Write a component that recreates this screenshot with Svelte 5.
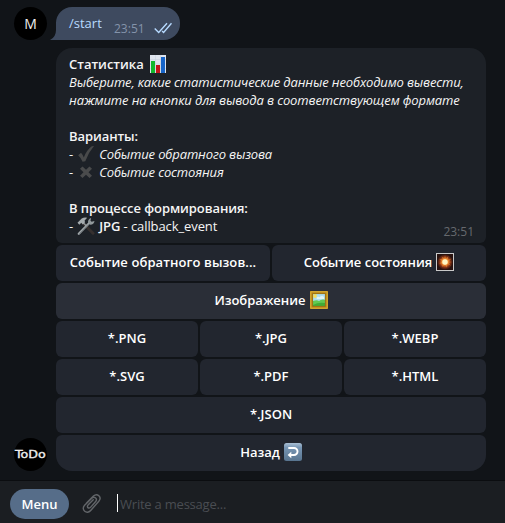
<script>
  const rows = [
    [{ text: 'Событие обратного вызов...', long: true }, { text: 'Событие состояния', icon: 'burst' }],
    [{ text: 'Изображение', icon: 'frame', active: true }],
    [{ text: '*.PNG' }, { text: '*.JPG' }, { text: '*.WEBP' }],
    [{ text: '*.SVG' }, { text: '*.PDF' }, { text: '*.HTML' }],
    [{ text: '*.JSON' }],
    [{ text: 'Назад', icon: 'back' }]
  ];
</script>

{#snippet emoji(name)}
  <svg class="emoji" viewBox="0 0 18 18" width="18" height="18" aria-hidden="true">
    {#if name === 'chart'}
      <rect x="1" y="0" width="16" height="18" fill="#dfe5ee" />
      <path d="M1 4.5h16M1 9h16M1 13.500h16M6.500 0v18M11.500 0v18" stroke="#c5cfdd" stroke-width=".5" />
      <rect x="2" y="6" width="4" height="12" fill="#12b82c" />
      <rect x="7" y="10" width="4" height="8" fill="#c01419" />
      <rect x="12" y="2" width="4" height="16" fill="#1765c9" />
    {:else if name === 'check'}
      <path d="M1.200 10.200 4 7.800Q6 10 6.800 12.500 9.500 5 14.800 1.200L17 1.100Q11.500 7.500 8.300 16.200L5.600 16.700Q4 12.800 1.200 10.200Z" fill="#48494a" />
    {:else if name === 'cross'}
      <path d="M5.500 3.500 9 6.800 12.500 3.500 15 5.800 11.500 9.200 15 12.700 12.500 15.100 9 11.700 5.500 15.100 3 12.700 6.500 9.200 3 5.800Z" fill="#4a4b4c" />
    {:else if name === 'tools'}
      <path d="M5.700 5.700 16 16.200" stroke="#36302f" stroke-width="3" stroke-linecap="round" />
      <path d="M6 5.500 10 9.500" stroke="#8e9294" stroke-width="1.500" />
      <path d="M.5 5.800 4.700 1.500Q7.500-.2 10.200.8L7.600 3.400 8 5.300 5.800 7.400 4.300 5.800 2.300 7.700Z" fill="#a5abae" />
      <path d="M1.800 16.800 12.800 5.500" stroke="#a5abae" stroke-width="2.200" stroke-linecap="round" />
      <path d="M2.300 16.700 11.500 7.200" stroke="#60676b" stroke-width=".7" />
      <path d="M11.100 5.800Q10.400 2.400 14.100.9L13.500 3.800 14.600 4.700 17.500 3.900Q17 7.500 13.300 7.700Z" fill="#92999c" />
    {:else if name === 'burst'}
      <defs>
        <radialGradient id="glow">
          <stop offset="0" stop-color="#fffbd8" />
          <stop offset=".22" stop-color="#ffe99a" />
          <stop offset=".42" stop-color="#e97c26" />
          <stop offset=".72" stop-color="#7d2f14" />
          <stop offset="1" stop-color="#29120f" />
        </radialGradient>
      </defs>
      <rect x=".5" y=".5" width="17" height="17" fill="#28120f" stroke="#c9c9c9" />
      <circle cx="9" cy="9" r="7.800" fill="url(#glow)" />
      <path d="m9 2 .8 4 2.600-3-.8 4 4-1.600-3.100 3 3.600.6-3.700.7 2.500 3-3.600-2-.5 4-1.700-3.700-3 3 1-4-4 .8 3.400-2.500L3 6l4 .6-1.400-3.400 2.800 2.600Z" fill="#f79a3d" opacity=".5" />
      <circle cx="9" cy="9" r="2.700" fill="#fff7c4" />
    {:else if name === 'frame'}
      <rect width="18" height="18" fill="#b88716" />
      <path d="M.8.8h16.400v16.400H.8z" fill="none" stroke="#dbb33b" />
      <rect x="3" y="3" width="12" height="12" fill="#acdef0" />
      <circle cx="5" cy="5" r="1.900" fill="#f5df5b" />
      <path d="M6.500 7q1.500-2 3-.7Q12 4 14 6v2H7Z" fill="#e0f5f5" />
      <path d="M3 10q4-1.500 6 0 2-2.200 6-1.300V15H3Z" fill="#62ca52" />
      <path d="M3 14q5-3 12-2v3H3Z" fill="#42ad35" />
      <path d="M2.600 2.600h12.800v12.800H2.600z" fill="none" stroke="#916916" stroke-width=".7" />
    {:else if name === 'back'}
      <defs>
        <linearGradient id="tile" x2="0" y2="1">
          <stop stop-color="#a9bfd4" />
          <stop offset=".25" stop-color="#7896b4" />
          <stop offset="1" stop-color="#58748f" />
        </linearGradient>
      </defs>
      <rect width="18" height="18" rx="2.500" fill="url(#tile)" />
      <path d="M4.300 5H10a3.500 3.500 0 0 1 0 7H6" fill="none" stroke="#fff" stroke-width="1.900" />
      <path d="M3.600 12 7.300 8.700v6.600Z" fill="#fff" />
    {/if}
  </svg>
{/snippet}

<div class="app">
  <main>
    <div class="outgoing">
      <div class="avatar">M</div>
      <div class="sent">
        <svg class="tail" viewBox="0 0 7 18" width="7" height="18"><path d="M7 0H6V8Q6 15 0 18H7Z" fill="#3e4a5f" /></svg>
        <span class="command">/start</span>
        <span class="sent-time">23:51</span>
        <svg class="ticks" viewBox="0 0 18 12" width="18" height="12">
          <path d="m.7 6.500 4 4L13 1.300M8.100 9l1.500 1.500L17.500 1.300" fill="none" stroke="#b7daff" stroke-width="1.400" />
        </svg>
      </div>
    </div>
    <div class="incoming">
      <div class="avatar brand">
        <span>ToDo</span>
      </div>
      <div class="content">
        <section class="message">
          <div class="line title"><b>Статистика</b>{@render emoji('chart')}</div>
          <div class="line"><i>Выберите, какие статистические данные необходимо вывести,</i></div>
          <div class="line"><i class="second">нажмите на кнопки для вывода в соответствующем формате</i></div>
          <div class="line"></div>
          <div class="line heading"><b>Варианты:</b></div>
          <div class="line item"><span>-</span>{@render emoji('check')}<i>Событие обратного вызова</i></div>
          <div class="line item"><span>-</span>{@render emoji('cross')}<i>Событие состояния</i></div>
          <div class="line"></div>
          <div class="line heading"><b>В процессе формирования:</b></div>
          <div class="line item"><span>-</span>{@render emoji('tools')}<span class="job"><b>JPG</b> - callback_event</span></div>
          <time>23:51</time>
        </section>
        <div class="keyboard">
          {#each rows as row}
            <div class="row">
              {#each row as button}
                <button class:active={button.active} class:long={button.long}>
                  <span>{button.text}</span>
                  {#if button.icon}{@render emoji(button.icon)}{/if}
                </button>
              {/each}
            </div>
          {/each}
        </div>
      </div>
    </div>
  </main>
  <footer>
    <button class="menu">Menu</button>
    <svg class="clip" viewBox="0 0 20 22" width="20" height="22">
      <path d="M4.200 10.300 11.400 3C15.400-.8 20.600 4.300 17 8.300L9 17.500C4.500 23.200-2.100 17 2.200 12.500L9.400 5.400C12.500 2.400 16.200 6 13.500 9L8.600 14.500C6.500 17 3.700 14.200 6 12L11.200 6.800" transform="translate(.5 .2) scale(.96)" fill="none" stroke="#626569" stroke-width="1.500" stroke-linecap="round" />
    </svg>
    <div class="input"><span class="caret"></span><span>Write a message...</span></div>
  </footer>
</div>

<style>
  :global(body) { background: #111418; }
  .app {
    width: 505px;
    height: 523px;
    display: flex;
    flex-direction: column;
    overflow: hidden;
    background: #111418;
    color: #f5f5f5;
    font: 13px/18px "Open Sans", "Noto Sans", sans-serif;
    box-sizing: border-box;
  }
  b { font-weight: 600; }
  i { letter-spacing: -.135px; }
  i.second { letter-spacing: -.11px; }
  svg { display: block; flex: none; }
  main { height: 480px; padding: 7px 19px 0 14px; box-sizing: border-box; }
  .outgoing, .incoming { display: flex; gap: 9px; }
  .incoming { margin-top: 8px; align-items: flex-end; }
  .avatar {
    width: 33px;
    height: 33px;
    flex: none;
    display: flex;
    align-items: center;
    justify-content: center;
    border-radius: 50%;
    background: #000;
    color: #eee;
    font: 14px/20px "Open Sans", sans-serif;
  }
  .brand span {
    font: 11px/14px "DejaVu Sans", sans-serif;
    -webkit-text-stroke: .35px #eee;
    transform: scaleX(1.15);
  }
  .sent {
    position: relative;
    width: 124px;
    height: 33px;
    display: flex;
    box-sizing: border-box;
    padding: 7px 8px 0 13px;
    border-radius: 16px 16px 16px 0;
    background: #3e4a5f;
  }
  .tail { position: absolute; left: -6px; bottom: 0; }
  .command { color: #b7daff; width: 45px; }
  .sent-time { color: #8493aa; font-size: 12px; line-height: 30px; }
  .ticks { margin: 8px 0 0 auto; }
  .content { width: 430px; }
  .message {
    position: relative;
    height: 195px;
    padding: 7px 13px 0;
    box-sizing: border-box;
    background: #1d2127;
    border-radius: 16px 16px 6px 6px;
  }
  .line { display: flex; height: 18px; white-space: pre; }
  .title { gap: 5px; }
  .heading { letter-spacing: -.08px; }
  .item { gap: 4px; }
  .job { letter-spacing: -.09px; }
  time { position: absolute; right: 12px; bottom: 2px; color: #66696e; font-size: 12px; }
  .keyboard { display: flex; flex-direction: column; gap: 2px; margin-top: 2px; }
  .row { display: flex; gap: 2px; }
  button {
    display: flex;
    align-items: center;
    justify-content: center;
    flex: 1 1 0;
    min-width: 0;
    height: 36px;
    gap: 4px;
    padding: 0 0 2px;
    border: 0;
    border-radius: 6px;
    background: #22262f;
    color: #fff;
    font: 600 13px/18px "Open Sans", "Noto Sans", sans-serif;
    white-space: nowrap;
  }
  button.active { background: #2a2e37; }
  button.long { letter-spacing: .09px; }
  .row:last-child button { border-radius: 6px 6px 16px 16px; }
  footer {
    height: 43px;
    display: flex;
    align-items: flex-start;
    padding: 8px 10px 0;
    box-sizing: border-box;
    border-top: 1px solid #0b0d10;
    background: #1b1e22;
  }
  button.menu {
    flex: none;
    width: 59px;
    height: 30px;
    padding: 0;
    border-radius: 15px;
    background: #566d89;
  }
  .clip { margin: 4px 0 0 13px; }
  .input { display: flex; gap: 2px; height: 18px; margin: 5px 0 0 15px; color: #4a4d52; letter-spacing: -.22px; }
  .input span:last-child { line-height: 20px; }
  .caret { width: 1px; height: 18px; background: #fff; }
</style>
